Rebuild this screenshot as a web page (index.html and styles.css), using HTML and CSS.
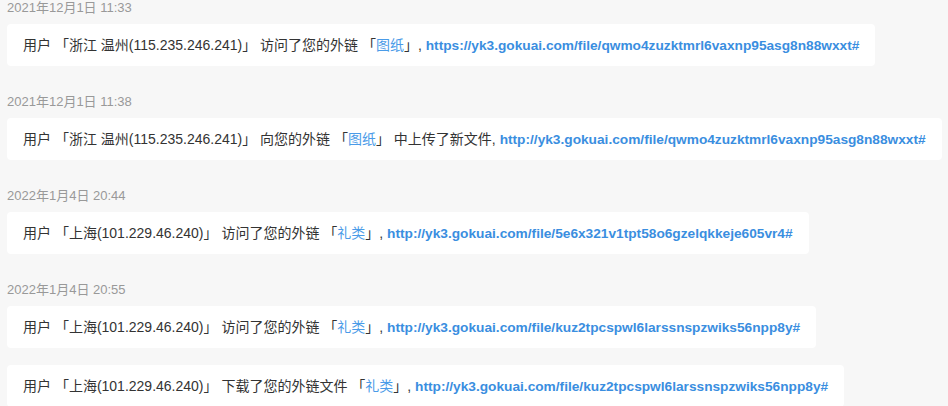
FILE: index.html
```html
<!DOCTYPE html>
<html lang="zh-CN">
<head>
    <meta charset="UTF-8">
    <meta name="viewport" content="width=device-width, initial-scale=1.0">
    <title>外链动态</title>
    <link rel="stylesheet" href="styles.css">
</head>
<body>
    <div class="log-list">
        <div class="log-group">
            <div class="log-date">2021年12月1日 11:33</div>
            <div class="log-item">用户 「浙江 温州(115.235.246.241)」 访问了您的外链 「<a class="name" href="#">图纸</a>」, <a class="url" href="#">https://yk3.gokuai.com/file/qwmo4zuzktmrl6vaxnp95asg8n88wxxt#</a></div>
        </div>
        <div class="log-group">
            <div class="log-date">2021年12月1日 11:38</div>
            <div class="log-item">用户 「浙江 温州(115.235.246.241)」 向您的外链 「<a class="name" href="#">图纸</a>」 中上传了新文件, <a class="url" href="#">http://yk3.gokuai.com/file/qwmo4zuzktmrl6vaxnp95asg8n88wxxt#</a></div>
        </div>
        <div class="log-group">
            <div class="log-date">2022年1月4日 20:44</div>
            <div class="log-item">用户 「上海(101.229.46.240)」 访问了您的外链 「<a class="name" href="#">礼类</a>」, <a class="url" href="#">http://yk3.gokuai.com/file/5e6x321v1tpt58o6gzelqkkeje605vr4#</a></div>
        </div>
        <div class="log-group">
            <div class="log-date">2022年1月4日 20:55</div>
            <div class="log-item">用户 「上海(101.229.46.240)」 访问了您的外链 「<a class="name" href="#">礼类</a>」, <a class="url" href="#">http://yk3.gokuai.com/file/kuz2tpcspwl6larssnspzwiks56npp8y#</a></div>
            <div class="log-item">用户 「上海(101.229.46.240)」 下载了您的外链文件 「<a class="name" href="#">礼类</a>」, <a class="url" href="#">http://yk3.gokuai.com/file/kuz2tpcspwl6larssnspzwiks56npp8y#</a></div>
        </div>
    </div>
</body>
</html>
```

FILE: styles.css
```css
body {
    margin: 0;
    background-color: #f7f7f7;
    font-family: "Liberation Sans", Arial, "Noto Sans CJK SC", sans-serif;
    color: #333;
}
.log-list {
    display: flex;
    flex-direction: column;
    gap: 28px;
    padding: 0 7px;
}
.log-group {
    display: flex;
    flex-direction: column;
    align-items: flex-start;
    gap: 17px;
}
.log-date {
    font-size: 13px;
    line-height: 16px;
    color: #999;
    margin-bottom: -9px;
}
.log-item {
    background-color: #fff;
    border-radius: 4px;
    padding: 12px 16px;
    font-size: 14px;
    line-height: 18px;
    height: 18px;
    white-space: nowrap;
}
.log-item a {
    text-decoration: none;
}
.log-item .name {
    color: #4a9be8;
}
.log-item .url {
    color: #3a8ee0;
    font-weight: bold;
    font-size: 13.7px;
    line-height: 1;
}
```
